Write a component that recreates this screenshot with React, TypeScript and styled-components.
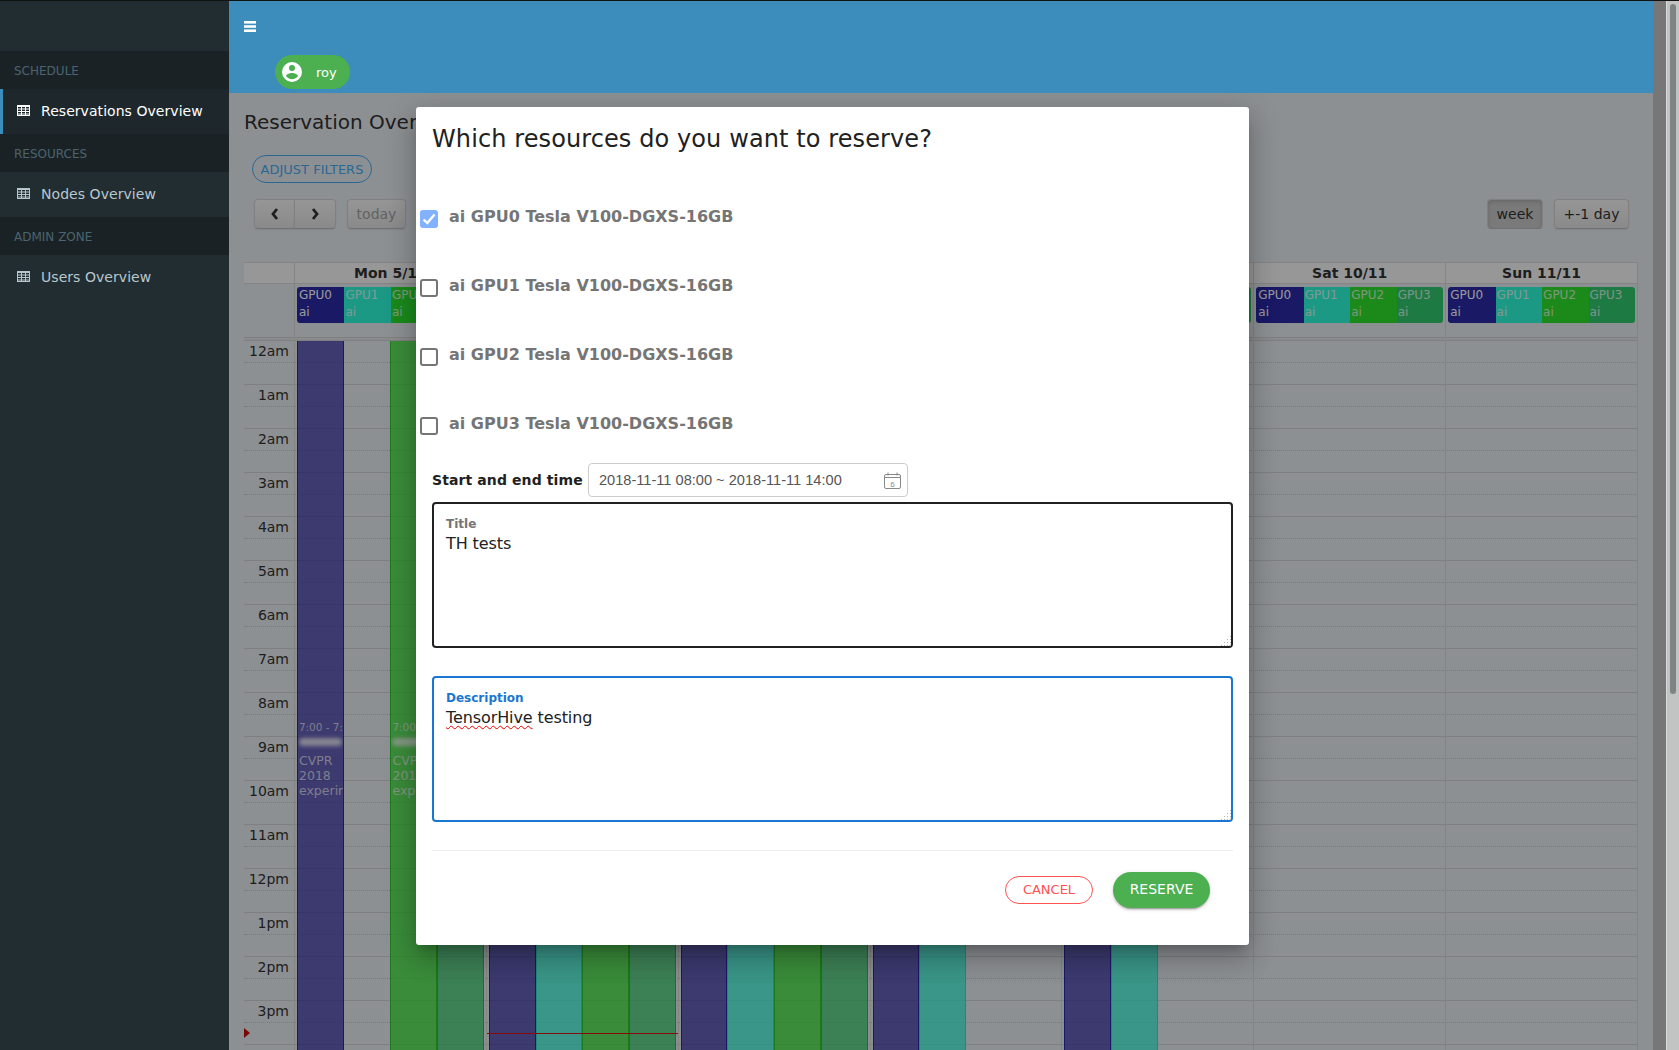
import React from 'react';
import styled, { createGlobalStyle } from 'styled-components';

const GlobalStyle = createGlobalStyle`
  html, body {
    margin: 0;
    height: 100%;
    overflow: hidden;
    font-family: "DejaVu Sans", sans-serif;
  }
  * {
    box-sizing: border-box;
  }
`;

const Page = styled.div`
  height: 1050px;
  display: flex;
  flex-direction: column;
  background: #222d32;
  border-top: 1px solid #111;
`;
const Body = styled.div`
  flex: 1;
  min-height: 0;
  display: flex;
`;

const Sidebar = styled.aside`
  width: 229px;
  flex: none;
  padding-top: 50px;
  background: #222d32;
`;
const SectionHeader = styled.div`
  height: 38px;
  padding: 2px 0 0 14px;
  display: flex;
  align-items: center;
  background: #1a2226;
  color: #4b646f;
  font-size: 12px;
`;
const SideItem = styled.div<{ $active?: boolean }>`
  height: 45px;
  padding: 0 0 2px 14px;
  display: flex;
  align-items: center;
  gap: 11px;
  border-left: 3px solid ${p => (p.$active ? '#3c8dbc' : 'transparent')};
  background: ${p => (p.$active ? '#1e282c' : 'transparent')};
  color: ${p => (p.$active ? '#fff' : '#b8c7ce')};
  font-size: 14px;
  letter-spacing: 0.05px;
`;

const Main = styled.main`
  flex: 1;
  min-width: 0;
  display: flex;
  flex-direction: column;
`;
const TopBar = styled.header`
  height: 92px;
  flex: none;
  background: #3c8dbc;
  color: #fff;
`;
const MenuToggle = styled.div`
  height: 34px;
  padding: 20px 0 0 15px;
  line-height: 0;
`;
const UserBadge = styled.div`
  width: 75px;
  height: 34px;
  margin: 20px 0 0 46px;
  padding-left: 5px;
  display: flex;
  align-items: center;
  gap: 12px;
  border-radius: 17px;
  background: #4caf50;
  font-size: 13px;
`;

const Content = styled.div`
  flex: 1;
  min-height: 0;
  position: relative;
  overflow: hidden;
  padding: 14px 15px 0;
  background: #ecf0f5;
`;
const Backdrop = styled.div`
  position: absolute;
  inset: 0;
  z-index: 5;
  background: rgba(0, 0, 0, 0.4);
`;
const PageTitle = styled.h1`
  margin: 0;
  font-size: 20px;
  line-height: 30px;
  font-weight: 400;
  color: #333;
  white-space: nowrap;
`;
const FilterButton = styled.button`
  display: block;
  width: 120px;
  height: 28px;
  margin: 18px 0 0 8px;
  padding: 0;
  border: 1px solid #45aef5;
  border-radius: 14px;
  background: transparent;
  color: #45aef5;
  font: 13px "DejaVu Sans", sans-serif;
`;
const Toolbar = styled.div`
  margin-top: 16px;
  padding: 0 9px 0 10px;
  display: flex;
  justify-content: space-between;
`;
const ButtonGroup = styled.div`
  display: flex;
  gap: 11px;
`;
const NavPair = styled.div`
  display: flex;
`;
const CalButton = styled.div<{ $active?: boolean; $muted?: boolean; $w: number; $joined?: 'left' | 'right' }>`
  width: ${p => p.$w}px;
  height: 30px;
  display: flex;
  align-items: center;
  justify-content: center;
  border: 1px solid #d6d6d6;
  border-bottom-color: #bdbdbd;
  border-radius: ${p => (p.$joined === 'left' ? '4px 0 0 4px' : p.$joined === 'right' ? '0 4px 4px 0' : '4px')};
  ${p => (p.$joined === 'right' ? 'margin-left: -1px;' : '')}
  background: ${p => (p.$active ? '#cccccc' : 'linear-gradient(#fafafa, #e6e6e6)')};
  box-shadow: ${p => (p.$active ? 'inset 0 2px 4px rgba(0,0,0,.15)' : '0 1px 2px rgba(0,0,0,.08)')};
  color: ${p => (p.$muted ? '#a3a3a3' : '#333')};
  font-size: 14px;
`;

const Calendar = styled.div`
  margin-top: 33px;
  width: 1394px;
`;
const HeadRow = styled.div`
  height: 22px;
  display: grid;
  grid-template-columns: 51px repeat(7, minmax(0, 1fr));
  border-top: 1px solid #ddd;
  border-bottom: 1px solid #ddd;
  background: #fcfcfc;
`;
const HeadCell = styled.div`
  border-right: 1px solid #ddd;
  text-align: center;
  font-size: 14px;
  line-height: 20px;
  font-weight: 700;
  color: #333;
`;
const AllDayRow = styled.div`
  height: 53px;
  display: grid;
  grid-template-columns: 51px repeat(7, minmax(0, 1fr));
`;
const AllDayCell = styled.div`
  padding: 3px 2px 0;
  display: flex;
  align-items: flex-start;
  border-right: 1px solid #ddd;
`;
const ResourceChip = styled.div<{ $color: string; $first: boolean; $last: boolean }>`
  flex: 1;
  min-width: 0;
  height: 36px;
  padding-left: ${p => (p.$first ? '2px' : '1px')};
  overflow: hidden;
  background: ${p => p.$color};
  border-radius: ${p => (p.$first ? '3px 0 0 3px' : p.$last ? '0 3px 3px 0' : '0')};
  font-size: 12px;
  line-height: 17px;
`;
const ChipName = styled.div<{ $dim: boolean }>`
  color: ${p => (p.$dim ? 'rgba(255,255,255,.8)' : '#fff')};
`;
const GridDivider = styled.div`
  height: 3px;
  border-top: 1px solid #d4d4d4;
  background: #e6e8ec;
`;

const TimeGrid = styled.div`
  position: relative;
  height: 710px;
`;
const HourRow = styled.div`
  position: relative;
  height: 44px;
  border-top: 1px solid #d4d4d4;
  &::after {
    content: "";
    position: absolute;
    left: 0;
    right: 0;
    top: 21px;
    border-top: 1px dotted #c8c8c8;
  }
`;
const HourLabel = styled.div`
  width: 45px;
  text-align: right;
  font-size: 14px;
  line-height: 21px;
  color: #333;
`;
const DayColumns = styled.div`
  position: absolute;
  inset: 0;
  display: grid;
  grid-template-columns: 51px repeat(7, minmax(0, 1fr));
`;
const DayColumn = styled.div`
  position: relative;
  padding: 1px 2px 0;
  display: flex;
  border-right: 1px solid #ddd;
`;
const Lane = styled.div`
  flex: 1;
  min-width: 0;
`;
const LaneEvent = styled.div<{ $bg: string; $edge: string }>`
  height: 100%;
  padding: 379px 0 0 1px;
  overflow: hidden;
  background: ${p => p.$bg};
  border: 1px solid ${p => p.$edge};
  border-width: 0 1px;
  color: rgba(255, 255, 255, 0.72);
  font-size: 12.5px;
  line-height: 15px;
`;
const EventTime = styled.div`
  font-size: 10.4px;
  white-space: nowrap;
  line-height: 14px;
`;
const Smudge = styled.div`
  height: 8px;
  margin: 4px 1px 7px 0;
  border-radius: 4px;
  background: rgba(255, 255, 255, 0.8);
  filter: blur(2px);
`;
const NowArrow = styled.div`
  position: absolute;
  left: 0;
  top: 688px;
  border-left: 6px solid #c80d0d;
  border-top: 5px solid transparent;
  border-bottom: 5px solid transparent;
`;
const NowLine = styled.div`
  position: absolute;
  left: 0;
  right: 0;
  top: 693px;
  border-top: 1px solid #e01212;
`;

const Modal = styled.div`
  position: absolute;
  left: 187px;
  top: 14px;
  z-index: 10;
  width: 833px;
  height: 838px;
  padding: 16px;
  border-radius: 3px;
  background: #fff;
  box-shadow: 0 16px 24px 2px rgba(0, 0, 0, 0.14), 0 6px 30px 5px rgba(0, 0, 0, 0.12), 0 8px 10px -5px rgba(0, 0, 0, 0.2);
`;
const ModalTitle = styled.h2`
  margin: 0;
  font-size: 24px;
  line-height: 32px;
  font-weight: 400;
  letter-spacing: 0.1px;
  color: #212121;
`;
const ResourceList = styled.div`
  margin: 51px 0 0 -12px;
  display: flex;
  flex-direction: column;
  gap: 40px;
`;
const ResourceRow = styled.label`
  height: 29px;
  display: flex;
  align-items: flex-start;
  gap: 11px;
  font-size: 16px;
  line-height: 22px;
  font-weight: 700;
  color: #757575;
`;
const CheckBox = styled.span<{ $checked?: boolean }>`
  width: 18px;
  height: 18px;
  margin-top: 4px;
  display: flex;
  align-items: center;
  justify-content: center;
  border: ${p => (p.$checked ? 'none' : '2px solid #757575')};
  border-radius: 3px;
  background: ${p => (p.$checked ? '#82b1ff' : '#fff')};
`;
const DateRow = styled.div`
  margin-top: 21px;
  display: flex;
  align-items: center;
`;
const DateLabel = styled.div`
  width: 156px;
  flex: none;
  font-size: 14px;
  letter-spacing: 0.1px;
  font-weight: 700;
  white-space: nowrap;
  color: #212121;
`;
const DateInput = styled.div`
  position: relative;
  width: 320px;
  height: 34px;
  padding-left: 10px;
  display: flex;
  align-items: center;
  border: 1px solid #ccc;
  border-radius: 4px;
  font: 14.6px "Liberation Sans", Arial, sans-serif;
  color: #555;
`;
const CalendarGlyph = styled.svg`
  position: absolute;
  right: 6px;
  top: 8px;
`;
const TextField = styled.div<{ $focused?: boolean }>`
  position: relative;
  height: 146px;
  margin-top: ${p => (p.$focused ? '28px' : '5px')};
  padding: 13px 12px 0;
  border: 2px solid ${p => (p.$focused ? '#1976d2' : '#212121')};
  border-radius: 4px;
  &::after {
    content: "";
    position: absolute;
    right: 0;
    bottom: 0;
    width: 11px;
    height: 11px;
    background-image: radial-gradient(#b5b5b5 0.8px, transparent 1px);
    background-size: 3px 3px;
    clip-path: polygon(100% 0, 100% 100%, 0 100%);
  }
`;
const FieldLabel = styled.div<{ $focused?: boolean }>`
  font-size: 12px;
  line-height: 14px;
  font-weight: 700;
  color: ${p => (p.$focused ? '#1976d2' : '#757575')};
`;
const FieldValue = styled.div`
  margin-top: 2px;
  font-size: 16px;
  line-height: 22px;
  letter-spacing: -0.1px;
  color: #212121;
`;
const Misspelled = styled.span`
  text-decoration: underline wavy #e00;
  text-decoration-thickness: 1px;
  text-underline-offset: 2px;
`;
const ModalFooter = styled.div`
  margin-top: 28px;
  height: 58px;
  padding: 21px 23px 0 0;
  display: flex;
  justify-content: flex-end;
  align-items: center;
  gap: 20px;
  border-top: 1px solid #eee;
`;
const CancelButton = styled.button`
  width: 88px;
  height: 28px;
  padding: 0 0 2px;
  border: 1px solid #ff5252;
  border-radius: 14px;
  background: #fff;
  color: #ff5252;
  font: 13px "DejaVu Sans", sans-serif;
`;
const ReserveButton = styled.button`
  width: 97px;
  height: 36px;
  padding: 0 0 2px;
  border: none;
  border-radius: 18px;
  background: #4caf50;
  box-shadow: 0 3px 1px -2px rgba(0, 0, 0, 0.2), 0 2px 2px 0 rgba(0, 0, 0, 0.14), 0 1px 5px 0 rgba(0, 0, 0, 0.12);
  color: #fff;
  font: 14px "DejaVu Sans", sans-serif;
`;

const PageEdge = styled.div`
  width: 13px;
  flex: none;
  background: #777;
`;
const ScrollTrack = styled.div`
  width: 13px;
  flex: none;
  padding: 3px 3px 0 3px;
  border-left: 1px solid #d8dada;
  background: #c2c4c4;
`;
const ScrollThumb = styled.div`
  height: 690px;
  border-radius: 3px;
  background: #7e8484;
`;

const TableIcon = () => (
  <svg width="13" height="11" viewBox="0 0 13 11" fill="none" stroke="currentColor" strokeWidth="1">
    <rect x="0.5" y="0.5" width="12" height="10" />
    <path d="M0 1.5h13M0 4h13M0 6.5h13M0 9h13M4.5 1v9M8.5 1v9" />
  </svg>
);

const BarsIcon = () => (
  <svg width="12" height="11" viewBox="0 0 12 11" fill="#fff">
    <rect width="12" height="2.6" />
    <rect y="4.2" width="12" height="2.6" />
    <rect y="8.4" width="12" height="2.6" />
  </svg>
);

const AccountIcon = () => (
  <svg width="24" height="24" viewBox="0 0 24 24" fill="#fff">
    <path d="M12,19.2C9.5,19.2 7.29,17.92 6,16C6.03,14 10,12.9 12,12.9C14,12.9 17.97,14 18,16C16.71,17.92 14.5,19.2 12,19.2M12,5A3,3 0 0,1 15,8A3,3 0 0,1 12,11A3,3 0 0,1 9,8A3,3 0 0,1 12,5M12,2A10,10 0 0,0 2,12A10,10 0 0,0 12,22A10,10 0 0,0 22,12A10,10 0 0,0 12,2Z" />
  </svg>
);

const Chevron = ({ points }: { points: string }) => (
  <svg width="8" height="12" viewBox="0 0 8 12" fill="none" stroke="#333" strokeWidth="2.8">
    <polyline points={points} />
  </svg>
);

const days = ['Mon 5/11', 'Tue 6/11', 'Wed 7/11', 'Thu 8/11', 'Fri 9/11', 'Sat 10/11', 'Sun 11/11'];
const hours = ['12am', '1am', '2am', '3am', '4am', '5am', '6am', '7am', '8am', '9am', '10am', '11am', '12pm', '1pm', '2pm', '3pm', '4pm'];

const gpus = [
  { name: 'GPU0', chip: '#2b2baa', bg: 'rgba(47,41,164,.72)', edge: '#2b2baa' },
  { name: 'GPU1', chip: '#30ffde', bg: 'rgba(43,254,220,.72)', edge: '#30e8c8' },
  { name: 'GPU2', chip: '#2ee62e', bg: 'rgba(44,230,41,.72)', edge: '#2ecc2e' },
  { name: 'GPU3', chip: '#32cc71', bg: 'rgba(47,203,102,.72)', edge: '#2eb865' },
];

// which lanes hold a reservation on each day, gpu index by lane
const booked = [
  [true, false, true, true],
  [true, true, true, true],
  [true, true, true, true],
  [true, true, false, false],
  [true, true, false, false],
  [false, false, false, false],
  [false, false, false, false],
];

export default function App() {
  return (
    <Page>
      <GlobalStyle />
      <Body>
        <Sidebar>
          <SectionHeader>SCHEDULE</SectionHeader>
          <SideItem $active><TableIcon />Reservations Overview</SideItem>
          <SectionHeader>RESOURCES</SectionHeader>
          <SideItem><TableIcon />Nodes Overview</SideItem>
          <SectionHeader>ADMIN ZONE</SectionHeader>
          <SideItem><TableIcon />Users Overview</SideItem>
        </Sidebar>
        <Main>
          <TopBar>
            <MenuToggle><BarsIcon /></MenuToggle>
            <UserBadge><AccountIcon />roy</UserBadge>
          </TopBar>
          <Content>
            <PageTitle>Reservation Overview</PageTitle>
            <FilterButton>ADJUST FILTERS</FilterButton>
            <Toolbar>
              <ButtonGroup>
                <NavPair>
                  <CalButton $w={41} $joined="left"><Chevron points="6,1 2,6 6,11" /></CalButton>
                  <CalButton $w={42} $joined="right"><Chevron points="2,1 6,6 2,11" /></CalButton>
                </NavPair>
                <CalButton $w={59} $muted>today</CalButton>
              </ButtonGroup>
              <ButtonGroup>
                <CalButton $w={56} $active>week</CalButton>
                <CalButton $w={75}>+-1 day</CalButton>
              </ButtonGroup>
            </Toolbar>
            <Calendar>
              <HeadRow>
                <HeadCell />
                {days.map(d => <HeadCell key={d}>{d}</HeadCell>)}
              </HeadRow>
              <AllDayRow>
                <AllDayCell />
                {days.map(d => (
                  <AllDayCell key={d}>
                    {gpus.map((g, i) => (
                      <ResourceChip key={g.name} $color={g.chip} $first={i === 0} $last={i === 3}>
                        <ChipName $dim={i > 0}>{g.name}</ChipName>
                        <ChipName $dim={i > 0}>ai</ChipName>
                      </ResourceChip>
                    ))}
                  </AllDayCell>
                ))}
              </AllDayRow>
              <GridDivider />
              <TimeGrid>
                {hours.map(h => (
                  <HourRow key={h}><HourLabel>{h}</HourLabel></HourRow>
                ))}
                <DayColumns>
                  <DayColumn><NowArrow /></DayColumn>
                  {booked.map((lanes, d) => (
                    <DayColumn key={days[d]}>
                      {lanes.map((on, i) => (
                        <Lane key={i}>
                          {on && (
                            <LaneEvent $bg={gpus[i].bg} $edge={gpus[i].edge}>
                              <EventTime>7:00 - 7:00</EventTime>
                              <Smudge />
                              CVPR 2018 experiment
                            </LaneEvent>
                          )}
                        </Lane>
                      ))}
                      {d === 1 && <NowLine />}
                    </DayColumn>
                  ))}
                </DayColumns>
              </TimeGrid>
            </Calendar>
            <Backdrop />
            <Modal>
              <ModalTitle>Which resources do you want to reserve?</ModalTitle>
              <ResourceList>
                {gpus.map((g, i) => (
                  <ResourceRow key={g.name}>
                    <CheckBox $checked={i === 0}>
                      {i === 0 && (
                        <svg width="14" height="12" viewBox="0 0 14 12" fill="none" stroke="#fff" strokeWidth="2.4">
                          <path d="M1.5 6.5l3.8 3.6L12.5 1.5" />
                        </svg>
                      )}
                    </CheckBox>
                    ai {g.name} Tesla V100-DGXS-16GB
                  </ResourceRow>
                ))}
              </ResourceList>
              <DateRow>
                <DateLabel>Start and end time</DateLabel>
                <DateInput>
                  2018-11-11 08:00 ~ 2018-11-11 14:00
                  <CalendarGlyph width="17" height="17" viewBox="0 0 17 17" fill="none" stroke="#888">
                    <rect x="0.5" y="2.5" width="16" height="14" rx="1.5" />
                    <path d="M0.5 5.5h16M4 0.5v3M13 0.5v3" />
                    <text x="8.5" y="14.5" fontSize="8" fontFamily="Liberation Sans" textAnchor="middle" fill="#888" stroke="none">6</text>
                  </CalendarGlyph>
                </DateInput>
              </DateRow>
              <TextField>
                <FieldLabel>Title</FieldLabel>
                <FieldValue>TH tests</FieldValue>
              </TextField>
              <TextField $focused>
                <FieldLabel $focused>Description</FieldLabel>
                <FieldValue><Misspelled>TensorHive</Misspelled> testing</FieldValue>
              </TextField>
              <ModalFooter>
                <CancelButton>CANCEL</CancelButton>
                <ReserveButton>RESERVE</ReserveButton>
              </ModalFooter>
            </Modal>
          </Content>
        </Main>
        <PageEdge />
        <ScrollTrack><ScrollThumb /></ScrollTrack>
      </Body>
    </Page>
  );
}
